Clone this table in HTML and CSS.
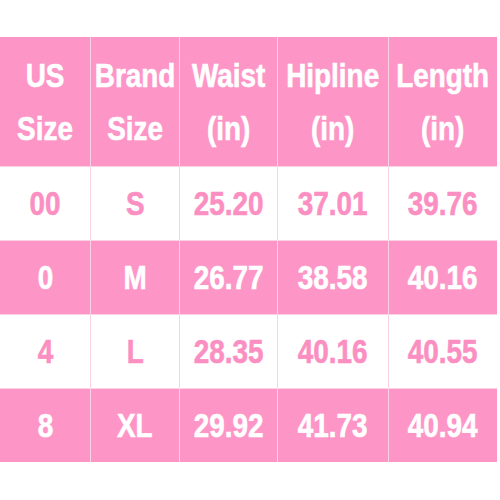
FILE: index.html
```html
<!DOCTYPE html>
<html>
<head>
<meta charset="utf-8">
<link rel="stylesheet" href="styles.css">
</head>
<body>
<div class="chart">
  <div class="cell head"><span class="t">US<br>Size</span></div>
  <div class="cell head"><span class="t">Brand<br>Size</span></div>
  <div class="cell head"><span class="t">Waist<br>(in)</span></div>
  <div class="cell head"><span class="t">Hipline<br>(in)</span></div>
  <div class="cell head"><span class="t">Length<br>(in)</span></div>

  <div class="cell light"><span class="t">00</span></div>
  <div class="cell light"><span class="t">S</span></div>
  <div class="cell light"><span class="t">25.20</span></div>
  <div class="cell light"><span class="t">37.01</span></div>
  <div class="cell light"><span class="t">39.76</span></div>

  <div class="cell dark"><span class="t">0</span></div>
  <div class="cell dark"><span class="t">M</span></div>
  <div class="cell dark"><span class="t">26.77</span></div>
  <div class="cell dark"><span class="t">38.58</span></div>
  <div class="cell dark"><span class="t">40.16</span></div>

  <div class="cell light"><span class="t">4</span></div>
  <div class="cell light"><span class="t">L</span></div>
  <div class="cell light"><span class="t">28.35</span></div>
  <div class="cell light"><span class="t">40.16</span></div>
  <div class="cell light"><span class="t">40.55</span></div>

  <div class="cell dark"><span class="t">8</span></div>
  <div class="cell dark"><span class="t">XL</span></div>
  <div class="cell dark"><span class="t">29.92</span></div>
  <div class="cell dark"><span class="t">41.73</span></div>
  <div class="cell dark"><span class="t">40.94</span></div>
</div>
</body>
</html>
```
FILE: styles.css
```css
html, body {
  margin: 0;
  padding: 0;
  background: #ffffff;
}
body {
  padding-top: 37px;
  font-family: "Liberation Sans", Arial, sans-serif;
  font-weight: bold;
}
.chart {
  width: 497px;
  display: grid;
  grid-template-columns: 90px 88px 97px 110px 108px;
  grid-template-rows: 129px 73px 73px 73px 73px;
  gap: 1px;
  background: #f9d2e4;
}
.cell {
  display: flex;
  align-items: center;
  justify-content: center;
  text-align: center;
  font-size: 34px;
}
.t {
  display: inline-block;
  transform: scaleX(0.82);
  white-space: nowrap;
  -webkit-text-stroke: 0.6px currentColor;
}
.head {
  background: #fe95c7;
  color: #ffffff;
  line-height: 53px;
}
.dark {
  background: #fe95c7;
  color: #ffffff;
}
.light {
  background: #ffffff;
  color: #fb8fc2;
}
```
